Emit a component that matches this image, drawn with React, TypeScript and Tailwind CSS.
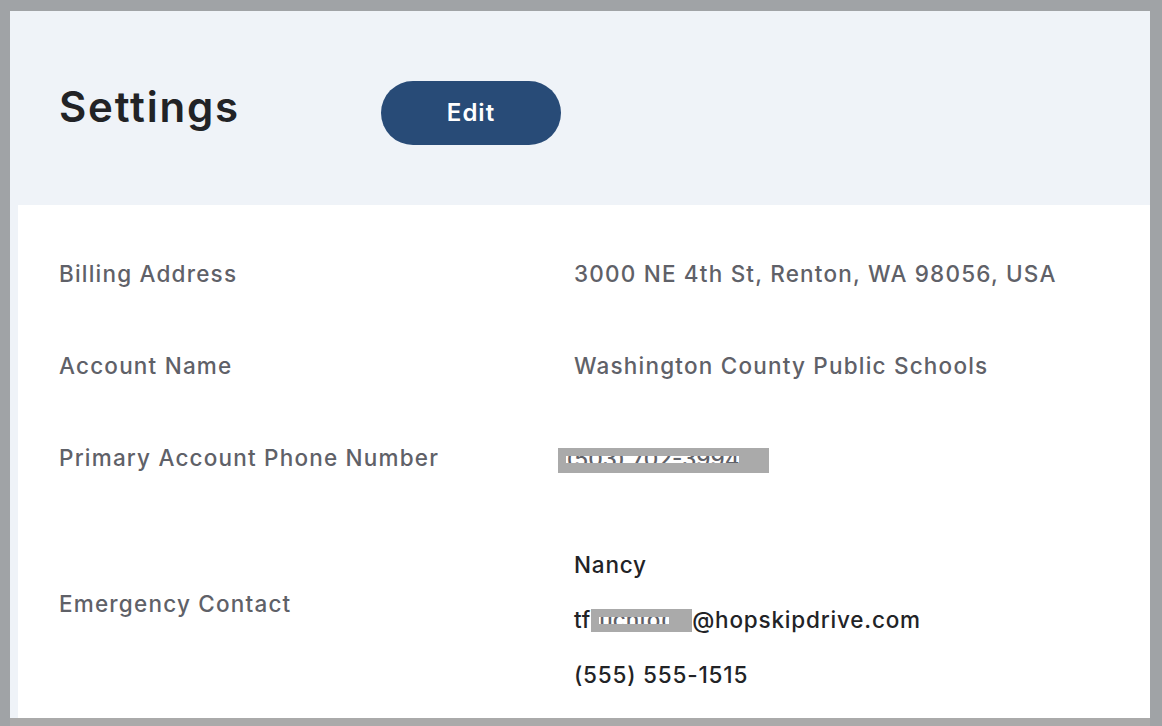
import React from "react";

const rows = [
  { label: "Billing Address", value: "3000 NE 4th St, Renton, WA 98056, USA" },
  { label: "Account Name", value: "Washington County Public Schools" },
];

function Redacted({ text, width, height }: { text: string; width: string; height: string }) {
  return (
    <span className={`relative inline-flex items-start overflow-hidden bg-[#aaaaaa] align-middle tracking-normal ${width} ${height}`}>
      <span className="mt-[8px] ml-[8px] h-[7px] overflow-hidden bg-white">
        <span className="block -mt-[9px] whitespace-nowrap leading-[24px] text-[#5f6168]">{text}</span>
      </span>
    </span>
  );
}

export default function App() {
  return (
    <div className="h-[726px] w-[1162px] overflow-hidden bg-[#a0a3a6] font-['Inter',sans-serif]">
      <div className="flex h-full flex-col pt-[11px] pl-[10px] pr-[12px]">
        <div className="flex h-[194px] shrink-0 items-start bg-[#eff3f8] pl-[49px] pt-[70px]">
          <h1 className="w-[322px] text-[42px] font-semibold leading-[52px] tracking-[1.8px] text-[#222326]">Settings</h1>
          <button className="h-[64px] w-[180px] rounded-full bg-[#284b77] text-[24px] font-semibold tracking-[1px] text-white">
            Edit
          </button>
        </div>
        <div className="flex h-[513px] shrink-0 bg-[#eff3f8] pl-[8px]">
          <div className="flex-1 bg-white pl-[41px] text-[22.5px] font-medium tracking-[1.2px] text-[#5f6168]">
            {rows.map((r) => (
              <div key={r.label} className="flex h-[92px] items-center first:mt-[23px]">
                <div className="w-[515px] shrink-0">{r.label}</div>
                <div>{r.value}</div>
              </div>
            ))}
            <div className="flex h-[92px] items-center">
              <div className="w-[515px] shrink-0">Primary Account Phone Number</div>
              <div className="-ml-[16px] mt-[2px]">
                <Redacted text="(503) 702-3994" width="w-[211px]" height="h-[25px]" />
              </div>
            </div>
            <div className="flex items-start">
              <div className="w-[515px] shrink-0 pt-[83px]">Emergency Contact</div>
              <div className="flex flex-col gap-[23px] pt-[45px] tracking-[0.8px] text-[#222326]">
                <div className="leading-[32px]">Nancy</div>
                <div className="flex items-center leading-[32px]">
                  tf
                  <Redacted text="ucnto(" width="w-[101px]" height="h-[23px]" />
                  @hopskipdrive.com
                </div>
                <div className="leading-[32px]">(555) 555-1515</div>
              </div>
            </div>
          </div>
        </div>
        <div className="flex-1 bg-[#aaaaaa]" />
      </div>
    </div>
  );
}
